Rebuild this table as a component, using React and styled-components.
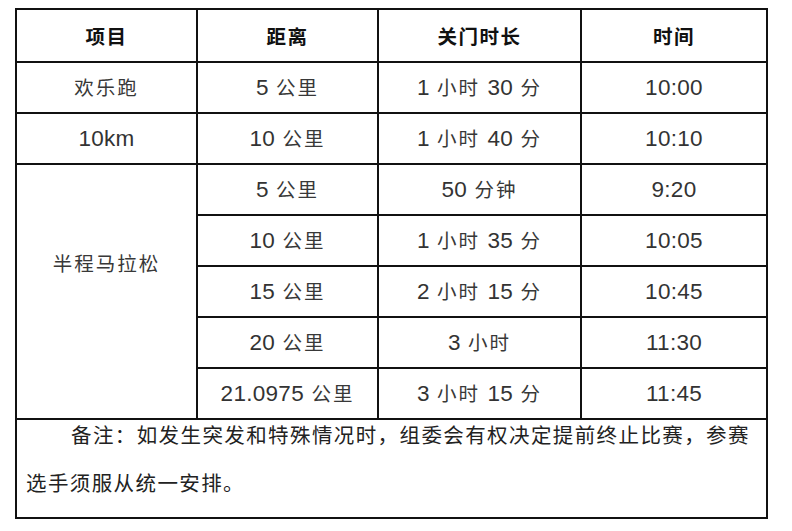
import React from 'react'
import styled, { createGlobalStyle } from 'styled-components'

const GlobalStyle = createGlobalStyle`
  html, body {
    margin: 0;
    padding: 0;
    background: #fff;
  }
  body {
    font-family: "Liberation Sans", "Noto Sans CJK SC", sans-serif;
  }
`

const rows = [
  { name: '欢乐跑', dist: '5 公里', close: '1 小时 30 分', time: '10:00' },
  { name: '10km', dist: '10 公里', close: '1 小时 40 分', time: '10:10' },
  { name: '半程马拉松', span: 5, dist: '5 公里', close: '50 分钟', time: '9:20' },
  { dist: '10 公里', close: '1 小时 35 分', time: '10:05' },
  { dist: '15 公里', close: '2 小时 15 分', time: '10:45' },
  { dist: '20 公里', close: '3 小时', time: '11:30' },
  { dist: '21.0975 公里', close: '3 小时 15 分', time: '11:45' },
]

// digits in the picture are set larger than the chinese text
const Mixed = ({ text }) =>
  text.split(/([0-9.:a-z]+)/).map((part, i) =>
    /^[0-9.:a-z]+$/.test(part) ? <Num key={i}>{part}</Num> : part
  )

const App = () => {
  return (
    <Page>
      <GlobalStyle />
      <Table>
        <colgroup>
          <col style={{ width: 181 }} />
          <col style={{ width: 181 }} />
          <col style={{ width: 203 }} />
          <col style={{ width: 186 }} />
        </colgroup>
        <thead>
          <tr>
            <Head>项目</Head>
            <Head>距离</Head>
            <Head>关门时长</Head>
            <Head>时间</Head>
          </tr>
        </thead>
        <tbody>
          {rows.map((r, i) => (
            <Row key={i}>
              {r.name && (
                <Cell rowSpan={r.span || 1} $lift={r.span ? 56 : 0}>
                  <Mixed text={r.name} />
                </Cell>
              )}
              <Cell><Mixed text={r.dist} /></Cell>
              <Cell><Mixed text={r.close} /></Cell>
              <Cell><Mixed text={r.time} /></Cell>
            </Row>
          ))}
          <tr>
            <NoteCell colSpan={4}>
              <Note>
                备注：如发生突发和特殊情况时，组委会有权决定提前终止比赛，参赛选手须服从统一安排。
              </Note>
            </NoteCell>
          </tr>
        </tbody>
      </Table>
    </Page>
  )
}

const Page = styled.div`
  padding: 8px 0 0 15px;
  width: 792px;
  height: 531px;
  box-sizing: border-box;
  overflow: hidden;
`
const Table = styled.table`
  border-collapse: collapse;
  table-layout: fixed;
  width: 751px;
  border: 2px solid #2a2a2a;
`
const Head = styled.th`
  height: 51px;
  padding: 0;
  border: 2px solid #111;
  font-size: 19.5px;
  font-weight: 700;
  color: #111;
  letter-spacing: 1.5px;
  text-align: center;
  vertical-align: middle;
`
const Row = styled.tr`
  height: 51px;
`
const Cell = styled.td`
  height: 47px;
  padding: 0 0 ${(p) => p.$lift || 0}px 0;
  border: 2px solid #111;
  font-size: 19.5px;
  line-height: 24px;
  color: #383838;
  letter-spacing: 2px;
  text-align: center;
  vertical-align: middle;
`
const Num = styled.span`
  font-family: "Liberation Sans", Arial, sans-serif;
  font-size: 22.5px;
  letter-spacing: 0.3px;
  color: #333;
`
const NoteCell = styled.td`
  height: 97px;
  padding: 0 2px 0 9px;
  border: 2px solid #111;
  vertical-align: top;
`
const Note = styled.div`
  margin-top: -8px;
  font-size: 20.5px;
  line-height: 48px;
  letter-spacing: 1.4px;
  color: #222;
  text-indent: 45px;
`

export default App
